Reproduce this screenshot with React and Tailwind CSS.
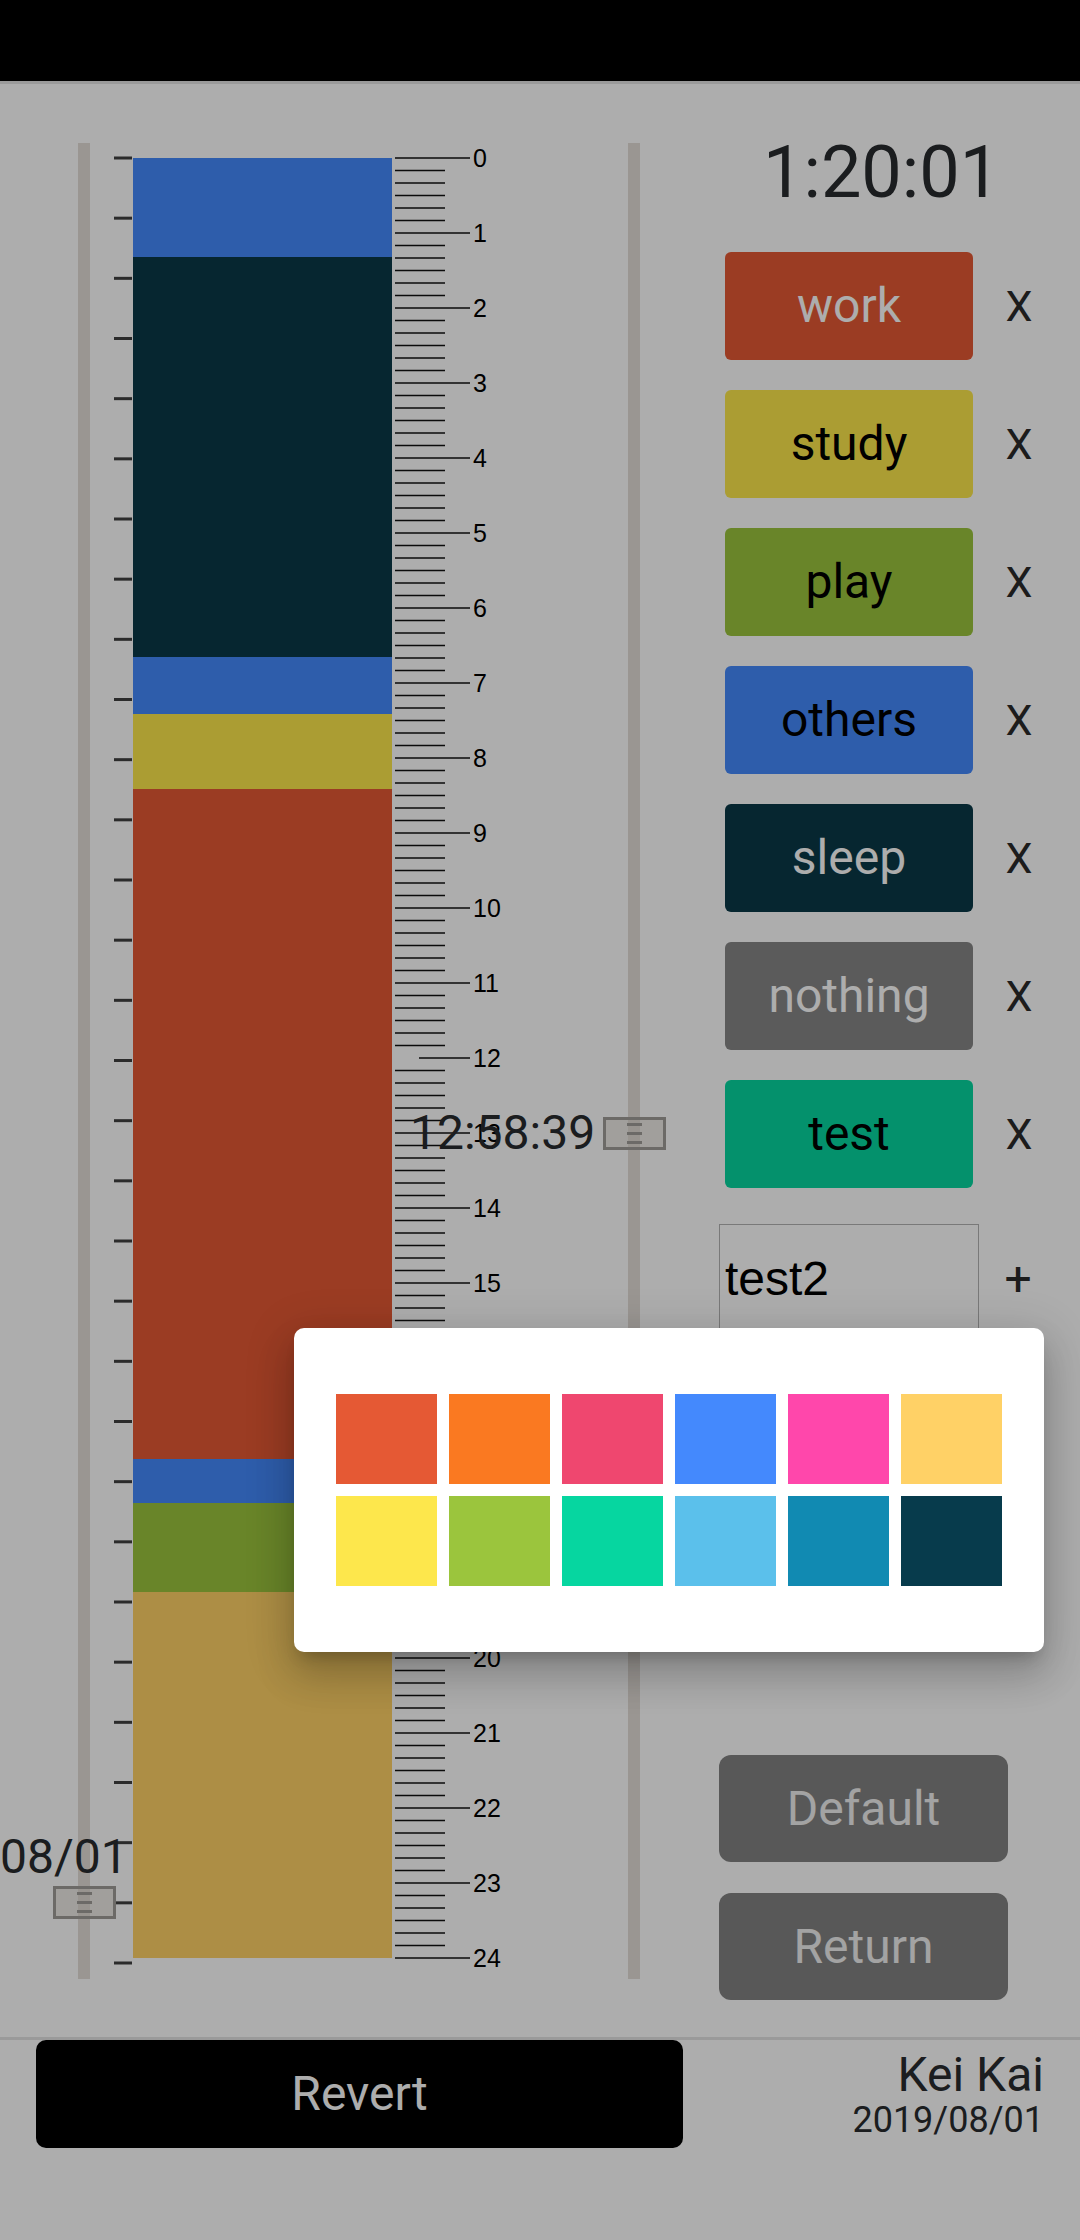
import React from 'react';

// segmentos del día (alto en px, 75px = 1 hora)
const segments = [
  { h: 99, color: 'bg-[#4489fd]' },
  { h: 400, color: 'bg-[#093847]' },
  { h: 57, color: 'bg-[#4489fd]' },
  { h: 75, color: 'bg-[#fde74c]' },
  { h: 670, color: 'bg-[#e55934]' },
  { h: 44, color: 'bg-[#4489fd]' },
  { h: 89, color: 'bg-[#9bc53d]' },
  { h: 366, color: 'bg-[#ffd166]' },
];

const tags = [
  { name: 'work', bg: 'bg-[#e55934]', text: 'text-white' },
  { name: 'study', bg: 'bg-[#fde74c]', text: 'text-black' },
  { name: 'play', bg: 'bg-[#9bc53d]', text: 'text-black' },
  { name: 'others', bg: 'bg-[#4489fd]', text: 'text-black' },
  { name: 'sleep', bg: 'bg-[#093847]', text: 'text-white' },
  { name: 'nothing', bg: 'bg-[#868686]', text: 'text-white' },
  { name: 'test', bg: 'bg-[#06d6a0]', text: 'text-black' },
];

const swatches = [
  'bg-[#e55934]', 'bg-[#fa7921]', 'bg-[#ef476f]', 'bg-[#4489fd]', 'bg-[#ff47ab]', 'bg-[#ffd166]',
  'bg-[#fde74c]', 'bg-[#9bc53d]', 'bg-[#06d6a0]', 'bg-[#5bc0eb]', 'bg-[#118ab2]', 'bg-[#073b4c]',
];

function Handle({ top }) {
  return (
    <div
      className="absolute left-[-25px] w-[63px] h-[33px] border-[3px] border-[#9f9c98] bg-[rgba(222,214,206,0.5)] flex flex-col items-center justify-center gap-[6px]"
      style={{ top }}
    >
      <div className="w-[15px] h-[3px] bg-[#9f9c98]" />
      <div className="w-[15px] h-[3px] bg-[#9f9c98]" />
      <div className="w-[15px] h-[3px] bg-[#9f9c98]" />
    </div>
  );
}

function DayTicks() {
  const ticks = Array.from({ length: 31 }, (_, i) => i * (1805 / 30));
  return (
    <svg width="19" height="1805" className="overflow-visible shrink-0">
      {ticks.map((y, i) => (
        <line key={i} x1="0" x2="18" y1={y} y2={y} stroke="#404040" strokeWidth="3" />
      ))}
    </svg>
  );
}

function HourRuler() {
  const lines = [];
  for (let h = 0; h <= 24; h++) {
    const y = h * 75;
    lines.push(
      <line key={'M' + h} x1={h === 12 ? 27 : 3} x2="78" y1={y} y2={y} stroke="#111" strokeWidth="1.4" />
    );
    lines.push(
      <text key={'T' + h} x="81" y={y} dominantBaseline="central" fontSize="25" fill="#000" fontFamily="'Liberation Sans', Arial, sans-serif">
        {h}
      </text>
    );
    if (h < 24) {
      for (let m = 1; m < 6; m++) {
        const my = y + m * 12.5;
        lines.push(<line key={'m' + h + m} x1="3" x2="53" y1={my} y2={my} stroke="#111" strokeWidth="1.4" />);
      }
    }
  }
  return (
    <svg width="236" height="1800" className="overflow-visible shrink-0">
      {lines}
    </svg>
  );
}

export default function App() {
  return (
    <div className="relative w-[1080px] h-[2240px] bg-white overflow-hidden font-['Roboto',sans-serif] text-[#282b2e]">
      {/* barra de estado */}
      <div className="h-[81px] bg-black" />
      <div className="h-[3px] bg-[#e3e3e3]" />

      <div className="flex h-[1953px]">
        {/* linea de tiempo */}
        <div className="relative w-[640px] flex items-start pt-[59px]">
          <div className="relative ml-[78px] w-[12px] h-[1836px] bg-[#e4ded8] shrink-0">
            <Handle top={1743} />
          </div>
          <div className="ml-[24px] mt-[15px] flex">
            <DayTicks />
            <div className="w-[259px] h-[1800px] flex flex-col shrink-0">
              {segments.map((s, i) => (
                <div key={i} className={s.color} style={{ height: s.h }} />
              ))}
            </div>
            <HourRuler />
          </div>
          <div className="relative w-[12px] h-[1836px] bg-[#e4ded8] shrink-0">
            <Handle top={974} />
          </div>

          <span className="absolute left-[410px] top-[1025px] text-[48px] leading-none whitespace-nowrap">12:58:39</span>
          <span className="absolute left-[0px] top-[1749px] text-[48px] leading-none whitespace-nowrap">08/01</span>
        </div>

        {/* panel derecho */}
        <div className="w-[440px] flex flex-col pt-[35px] pb-[37px]">
          <div className="h-[108px] leading-[108px] text-[72px] pl-[123px]">1:20:01</div>

          <div className="mt-[25px] flex flex-col gap-[30px]">
            {tags.map(t => (
              <div key={t.name} className="flex items-center">
                <div className={`ml-[85px] w-[248px] h-[108px] rounded-[6px] flex items-center justify-center text-[48px] ${t.bg} ${t.text}`}>
                  {t.name}
                </div>
                <span className="w-[92px] text-center text-[43px] text-[#2a2a2a]">X</span>
              </div>
            ))}
          </div>

          <div className="mt-[36px] flex items-center">
            <div className="ml-[79px] w-[260px] h-[109px] border border-[#b3b3b3] flex items-center pl-[5px] text-[48px] text-black font-['Liberation_Sans',Arial,sans-serif]">
              test2
            </div>
            <span className="w-[78px] text-center text-[48px] text-[#2a2a2a]">+</span>
          </div>

          <div className="mt-auto flex flex-col gap-[31px]">
            <button className="ml-[79px] w-[289px] h-[107px] rounded-[12px] bg-[#828282] text-[48px] text-[#f0f0f0]">Default</button>
            <button className="ml-[79px] w-[289px] h-[107px] rounded-[12px] bg-[#828282] text-[48px] text-[#f0f0f0]">Return</button>
          </div>
        </div>
      </div>

      <div className="h-[3px] bg-[#e3e3e3]" />

      {/* pie */}
      <div className="flex items-start">
        <button className="ml-[36px] w-[647px] h-[108px] rounded-[10px] bg-black text-white text-[48px]">Revert</button>
        <div className="ml-auto pr-[36px] mt-[11px] text-right">
          <div className="text-[48px] leading-none">Kei Kai</div>
          <div className="mt-[3px] text-[36px] leading-none">2019/08/01</div>
        </div>
      </div>

      {/* fondo del dialogo */}
      <div className="absolute inset-0 bg-black/[0.32]" />

      {/* selector de color */}
      <div className="absolute left-[294px] top-[1328px] w-[750px] h-[324px] bg-white rounded-[10px] px-[42px] pt-[66px] shadow-[0_11px_15px_-7px_rgba(0,0,0,0.2),0_24px_38px_3px_rgba(0,0,0,0.14),0_9px_46px_8px_rgba(0,0,0,0.12)]">
        <div className="grid grid-cols-6 gap-x-[12px] gap-y-[12px]">
          {swatches.map((c, i) => (
            <div key={i} className={`h-[90px] ${c}`} />
          ))}
        </div>
      </div>
    </div>
  );
}
